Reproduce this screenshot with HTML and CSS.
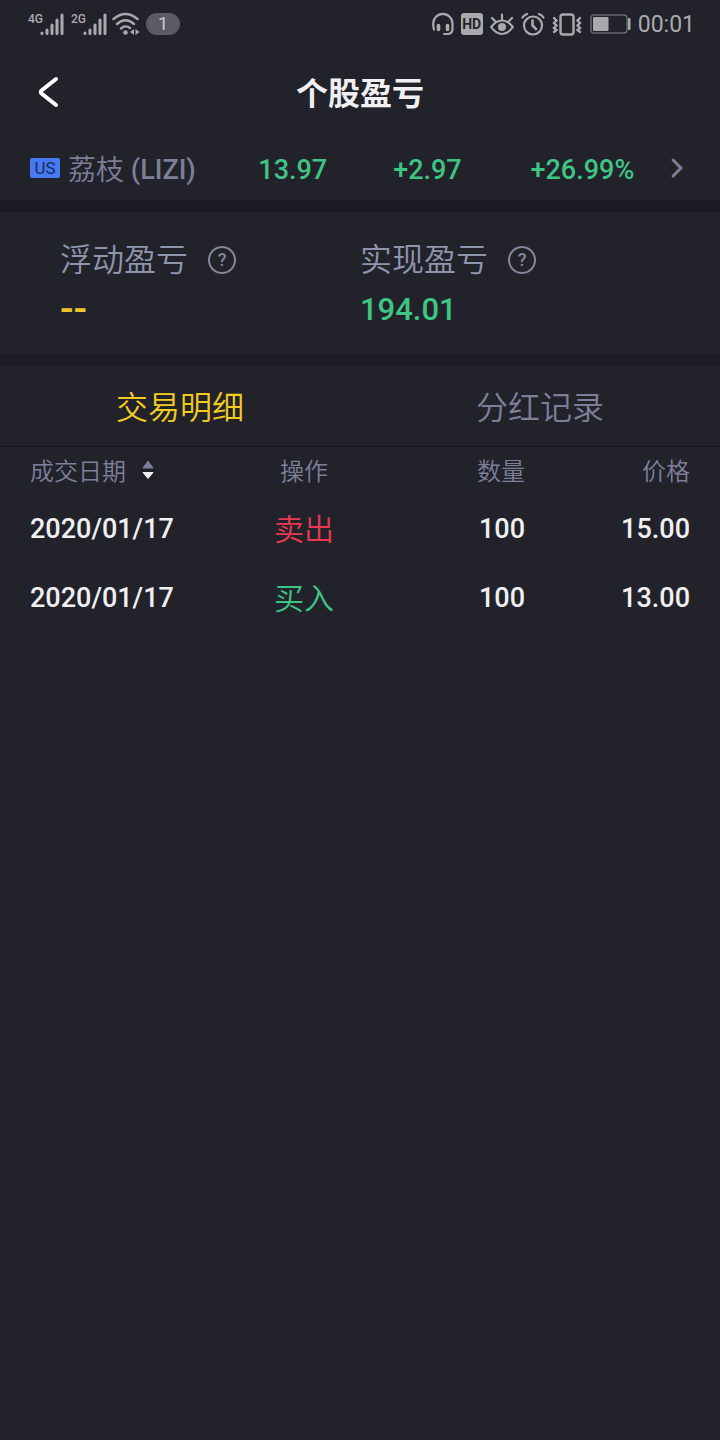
FILE: index.html
```html
<!DOCTYPE html>
<html lang="zh-CN">
<head>
    <meta charset="UTF-8">
    <meta name="viewport" content="width=device-width, initial-scale=1.0">
    <title>个股盈亏</title>
    <link rel="stylesheet" href="styles.css">
</head>
<body>

    <div class="status-bar">
        <div class="status-left">
            <span class="network">4G</span>
            <svg width="24" height="24" viewBox="0 0 24 24" fill="none" stroke="#aaaaae" stroke-width="3" stroke-linecap="round"><path d="M2 21v.5M7 18v3.500M12 13v8.500M17 8v13.500M22 3v18.500"/></svg>
            <span class="network network-second">2G</span>
            <svg width="24" height="24" viewBox="0 0 24 24" fill="none" stroke="#aaaaae" stroke-width="3" stroke-linecap="round"><path d="M2 21v.5M7 18v3.500M12 13v8.500M17 8v13.500M22 3v18.500"/></svg>
            <svg class="wifi" width="28" height="24" viewBox="0 0 28 24" fill="none" stroke="#aaaaae" stroke-width="2.4" stroke-linecap="round"><path d="M1.500 7Q13.500-3 25.500 7M5 12Q13.500 4.500 22 12M9 16.500Q13.500 12.500 18 16"/><circle cx="13.500" cy="20.500" r="2.300" fill="#aaaaae" stroke="none"/><path d="M22 17v6l-4-3zM23.500 17v6l4-3z" fill="#aaaaae" stroke="none"/></svg>
            <span class="notice-count">1</span>
        </div>
        <div class="status-right">
            <svg width="22" height="24" viewBox="0 0 22 24" fill="none" stroke="#aaaaae" stroke-width="2.2" stroke-linecap="round"><path d="M2 17.500Q1.200 15 1.200 11.500A9.300 9.300 0 0 1 20.500 11.500V17Q20.500 21.500 16 22H12"/><path d="M6.500 13.500v4M15.500 13.500v4" stroke-width="3.6"/></svg>
            <span class="hd">HD</span>
            <svg width="24" height="24" viewBox="0 0 24 24" fill="none" stroke="#aaaaae" stroke-width="2.2" stroke-linecap="round"><path d="M1.200 15Q6 8.500 12 8.500T22.800 15Q18 22 12 22T1.200 15ZM12 8V2.500M5.500 9.500L2 6M18.500 9.500L22 6"/><circle cx="12" cy="15" r="4" fill="#aaaaae" stroke="none"/></svg>
            <svg width="24" height="24" viewBox="0 0 24 24" fill="none" stroke="#aaaaae" stroke-width="2.2" stroke-linecap="round"><circle cx="12" cy="13.500" r="9"/><path d="M1.500 5.500Q3 3 6 2M22.500 5.500Q21 3 18 2"/><path d="M11.500 8.500v5l3.500 3.500" stroke-width="2.6"/></svg>
            <svg width="30" height="24" viewBox="0 0 30 24" fill="none" stroke="#aaaaae" stroke-width="2.4" stroke-linecap="round"><rect x="8.500" y="2.500" width="13" height="20" rx="2.500"/><path d="M2 6l2.500 2.500L2 11l2.500 2.500L2 16l2.500 2L2 20M28 6l-2.500 2.500L28 11l-2.500 2.500L28 16l-2.500 2L28 20"/></svg>
            <svg width="42" height="24" viewBox="0 0 42 24" fill="none"><rect x="2" y="3" width="36" height="18" rx="3" stroke="#66666e" stroke-width="1.6"/><rect x="4" y="5" width="15.500" height="14" rx="1" fill="#aaaaae"/><rect x="39" y="6" width="2.500" height="12" rx="1" fill="#aaaaae"/></svg>
            <span class="clock">00:01</span>
        </div>
    </div>

    <header class="nav">
        <button class="back" aria-label="返回">
            <svg width="24" height="32" viewBox="0 0 24 32" fill="none" stroke="#fff" stroke-width="4" stroke-linecap="round" stroke-linejoin="round"><path d="M20 3L5.500 14.500Q4 16 5.500 17.500L20 29"/></svg>
        </button>
        <h1>个股盈亏</h1>
    </header>

    <a class="quote" href="#">
        <span class="stock"><span class="market">US</span>荔枝 <span class="code">(LIZI)</span></span>
        <span class="figure">13.97</span>
        <span class="figure">+2.97</span>
        <span class="figure">+26.99%</span>
        <svg width="14" height="22" viewBox="0 0 14 22" fill="none" stroke="#7d7f99" stroke-width="3" stroke-linecap="round" stroke-linejoin="round"><path d="M3 3L11 11L3 19"/></svg>
    </a>

    <section class="summary">
        <div class="summary-item">
            <div class="summary-label">浮动盈亏
                <button class="help" aria-label="浮动盈亏说明">?</button>
            </div>
            <div class="summary-value none">--</div>
        </div>
        <div class="summary-item">
            <div class="summary-label">实现盈亏
                <button class="help" aria-label="实现盈亏说明">?</button>
            </div>
            <div class="summary-value">194.01</div>
        </div>
    </section>

    <nav class="tabs">
        <button class="tab active">交易明细</button>
        <button class="tab">分红记录</button>
    </nav>

    <table class="trades">
        <thead>
            <tr>
                <th class="date"><button class="sort">成交日期
                    <svg width="12" height="20" viewBox="0 0 12 20"><path d="M6 1l5 7H1z" fill="#7d7f99" stroke="#7d7f99" stroke-linejoin="round"/><path d="M6 18.500l-5-6h10z" fill="#f0f0f2" stroke="#f0f0f2" stroke-linejoin="round"/></svg>
                </button></th>
                <th class="action">操作</th>
                <th class="amount">数量</th>
                <th class="price">价格</th>
            </tr>
        </thead>
        <tbody>
            <tr>
                <td class="date">2020/01/17</td>
                <td class="action sell">卖出</td>
                <td class="amount">100</td>
                <td class="price">15.00</td>
            </tr>
            <tr>
                <td class="date">2020/01/17</td>
                <td class="action buy">买入</td>
                <td class="amount">100</td>
                <td class="price">13.00</td>
            </tr>
        </tbody>
    </table>

</body>
</html>
```
FILE: styles.css
```css
* {
    box-sizing: border-box;
}
body {
    margin: 0;
    min-height: 100vh;
    background-color: #22222b;
    color: #f0f0f2;
    font-family: Roboto, "Noto Sans CJK SC", sans-serif;
}
button {
    padding: 0;
    border: none;
    background: none;
    color: inherit;
    font: inherit;
    cursor: pointer;
}
svg {
    display: block;
    flex-shrink: 0;
}

/* phone status bar */
.status-bar {
    display: flex;
    justify-content: space-between;
    height: 48px;
    padding: 0 25px 0 28px;
    color: #aaaaae;
}
.status-left,
.status-right {
    display: flex;
    align-items: center;
}
.status-right {
    gap: 7px;
}
.network {
    align-self: flex-start;
    margin-top: 12px;
    font-size: 12px;
    font-weight: 500;
    line-height: 14px;
    width: 12px;
    white-space: nowrap;
}
.network-second {
    margin-left: 7px;
}
.wifi {
    margin-left: 5px;
}
.notice-count {
    width: 34px;
    margin-left: 6px;
    border-radius: 11px;
    background-color: #5b5b63;
    color: #c4c4c8;
    font-size: 19px;
    line-height: 22px;
    text-align: center;
}
.hd {
    width: 22px;
    border-radius: 3px;
    background-color: #aaaaae;
    color: #22222b;
    font-size: 14px;
    font-weight: 700;
    line-height: 22px;
    text-align: center;
}
.clock {
    font-size: 23px;
}

/* title */
.nav {
    display: grid;
    grid-template-columns: 60px 1fr 60px;
    align-items: center;
    height: 88px;
}
.back {
    display: flex;
    justify-content: flex-end;
}
.nav h1 {
    margin: 0;
    padding-bottom: 2px;
    font-size: 32px;
    font-weight: 700;
    text-align: center;
}

/* stock quote */
.quote {
    display: grid;
    grid-template-columns: 29fr 20fr 20fr 26fr 14px;
    align-items: center;
    height: 64px;
    padding: 0 36px 0 30px;
    color: #3fc583;
    font-size: 27px;
    font-weight: 500;
    text-align: center;
    text-decoration: none;
}
.stock {
    display: flex;
    align-items: center;
    color: #7d7f99;
    font-size: 28px;
    font-weight: 350;
    white-space: pre;
}
.figure,
.code {
    padding-top: 4px;
}
.code {
    font-size: 27px;
    font-weight: 500;
}
.market {
    width: 30px;
    margin-right: 8px;
    border-radius: 2px;
    background-color: #467af5;
    color: #1b2b58;
    font-size: 17px;
    font-weight: 400;
    line-height: 20px;
    text-align: center;
}

/* profit summary */
.summary {
    display: grid;
    grid-template-columns: 1fr 1fr;
    padding: 25px 60px 21px;
    border-top: 12px solid #1b1b24;
    border-bottom: 12px solid #1b1b24;
}
.summary-label {
    display: flex;
    align-items: center;
    gap: 20px;
    color: #8f95ad;
    font-size: 32px;
    font-weight: 350;
    line-height: 46px;
}
.help {
    width: 28px;
    height: 28px;
    border: 2px solid #85869a;
    border-radius: 50%;
    color: #85869a;
    font-size: 18px;
    font-weight: 500;
    line-height: 24px;
}
.summary-value {
    margin-top: 4px;
    color: #3fc583;
    font-size: 31px;
    font-weight: 500;
    line-height: 46px;
}
.none {
    color: #e9c52f;
    font-size: 40px;
}

/* tabs */
.tabs {
    display: grid;
    grid-template-columns: 1fr 1fr;
    border-bottom: 1px solid #15151c;
}
.tab {
    height: 80px;
    padding-bottom: 2px;
    color: #7d7f99;
    font-size: 32px;
    font-weight: 350;
}
.tab.active {
    color: #f2cb22;
}

/* trade list */
.trades {
    width: calc(100% - 60px);
    margin: 0 30px;
    border-collapse: collapse;
    table-layout: fixed;
}
.trades th {
    height: 47px;
    padding: 0 0 2px;
    color: #7d7f99;
    font-size: 24px;
    font-weight: 350;
}
.trades td {
    height: 69px;
    padding: 0;
    font-size: 27px;
    font-weight: 500;
}
.sort {
    display: flex;
    align-items: center;
    gap: 16px;
}
.trades .date {
    width: 28%;
    text-align: left;
}
.trades .action {
    width: 27%;
    text-align: center;
}
.trades .amount {
    width: 20%;
    text-align: right;
}
.trades .price {
    width: 25%;
    text-align: right;
}
.trades td.action {
    padding-bottom: 4px;
    font-size: 30px;
    font-weight: 350;
}
.trades .sell {
    color: #e8394f;
}
.trades .buy {
    color: #3fc583;
}
```
